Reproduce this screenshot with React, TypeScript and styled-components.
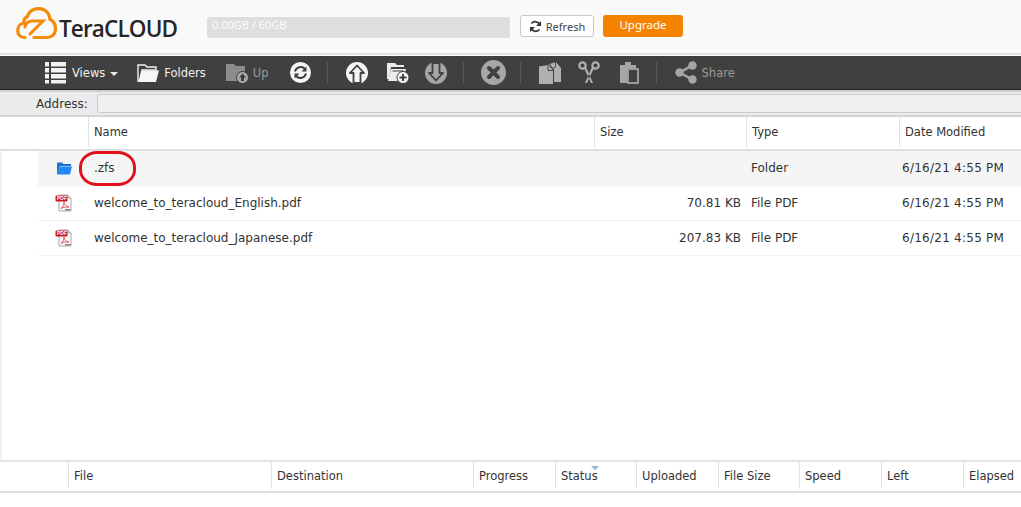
import React from 'react'
import styled, { createGlobalStyle } from 'styled-components'

const GlobalStyle = createGlobalStyle`
  html, body {
    margin: 0;
    padding: 0;
    background: #fff;
    overflow: hidden;
  }
  body {
    font-family: "DejaVu Sans", "Noto Sans", sans-serif;
    font-size: 12px;
    color: #333;
  }
`

const Page = styled.div`
  width: 1021px;
  height: 507px;
  display: flex;
  flex-direction: column;
  overflow: hidden;
`

const Header = styled.header`
  height: 53px;
  background: #fafafa;
  border-bottom: 2px solid #e4e4e4;
  display: flex;
  align-items: flex-start;
  flex-shrink: 0;
  padding-left: 16px;
`

const Logo = styled.div`
  display: flex;
  align-items: flex-start;
  width: 191px;
  height: 40px;
  margin-top: 7px;
  svg {
    flex-shrink: 0;
  }
`

const LogoText = styled.span`
  font-family: "Open Sans", sans-serif;
  font-size: 22.5px;
  font-weight: 600;
  letter-spacing: -0.85px;
  line-height: 30px;
  color: #262626;
  margin-left: 2px;
  margin-top: 7px;
`

const Quota = styled.div`
  width: 303px;
  height: 21px;
  margin-top: 17px;
  background: #dedede;
  border-radius: 2px;
  box-sizing: border-box;
  padding-left: 5px;
  color: #fcfcfc;
  font-family: "Noto Sans", sans-serif;
  font-size: 11px;
  line-height: 16px;
`

const RefreshButton = styled.div`
  width: 74px;
  height: 22px;
  margin: 15px 0 0 10px;
  box-sizing: border-box;
  background: #fff;
  border: 1px solid #c8c8c8;
  border-radius: 3px;
  display: flex;
  align-items: center;
  justify-content: center;
  gap: 4px;
  font-family: "Noto Sans", sans-serif;
  font-size: 11px;
  color: #444;
`

const UpgradeButton = styled.div`
  width: 80px;
  height: 22px;
  margin: 15px 0 0 9px;
  background: #f58300;
  border-radius: 3px;
  color: #fff;
  font-family: "Noto Sans", sans-serif;
  font-size: 11.5px;
  line-height: 20px;
  text-align: center;
`

const Toolbar = styled.nav`
  height: 33px;
  margin-top: 1px;
  background: #404040;
  border-bottom: 1px solid #222;
  display: flex;
  align-items: center;
  flex-shrink: 0;
  padding-left: 44px;
`

const ToolItem = styled.div<{ $after: number; $dim?: boolean }>`
  display: flex;
  align-items: center;
  gap: 5px;
  margin-right: ${(p) => p.$after}px;
  color: ${(p) => (p.$dim ? '#9a9a9a' : '#f0f0f0')};
  font-size: 11.5px;
  white-space: nowrap;
  svg {
    display: block;
    flex-shrink: 0;
  }
`

const Caret = styled.span`
  width: 0;
  height: 0;
  border-left: 4px solid transparent;
  border-right: 4px solid transparent;
  border-top: 4px solid #e8e8e8;
  margin-top: 2px;
`

const ToolSep = styled.span<{ $after: number }>`
  width: 1px;
  height: 21px;
  background: #585858;
  margin-right: ${(p) => p.$after}px;
`

const AddressBar = styled.div`
  height: 23px;
  background: #ebebeb;
  border-top: 2px solid #cfcfcf;
  border-bottom: 2px solid #d4d4d4;
  display: flex;
  align-items: center;
  flex-shrink: 0;
  padding-left: 36px;
  font-size: 12px;
  color: #333;
`

const AddressInput = styled.div`
  flex: 1;
  height: 17px;
  margin-left: 9px;
  background: #f0f0f0;
  border: 1px solid #ccc;
  border-right: none;
  border-radius: 3px 0 0 3px;
`

const HeaderRow = styled.div<{ $columns: string; $height: number }>`
  display: grid;
  grid-template-columns: ${(p) => p.$columns};
  height: ${(p) => p.$height}px;
  flex-shrink: 0;
  box-sizing: border-box;
  border-bottom: 2px solid #dcdfe6;
`

const HeaderCell = styled.div<{ $bare?: boolean }>`
  display: flex;
  align-items: center;
  padding-left: 5px;
  margin-bottom: 2px;
  position: relative;
  font-size: 11.5px;
  color: #333;
  border-left: ${(p) => (p.$bare ? 'none' : '1px solid #dde1e8')};
`

const FileList = styled.div`
  flex: 1;
  border-left: 2px solid #f2f2f2;
  padding-left: 36px;
`

const FileRow = styled.div<{ $selected?: boolean }>`
  display: grid;
  grid-template-columns: 51px 506px 152px 153px 1fr;
  height: 35px;
  box-sizing: border-box;
  align-items: center;
  background: ${(p) => (p.$selected ? '#f5f5f5' : '#fff')};
  border-bottom: 1px solid #f0f0f0;
  font-size: 12px;
  color: #333;
`

const IconCell = styled.div`
  display: flex;
  justify-content: center;
  svg {
    display: block;
  }
`

const NameCell = styled.div`
  position: relative;
  padding-left: 5px;
`

const SizeCell = styled.div`
  text-align: right;
  padding-right: 6px;
`

const TypeCell = styled.div`
  padding-left: 4px;
`

const DateCell = styled.div`
  padding-left: 2px;
  letter-spacing: 0.25px;
`

const RedMark = styled.span`
  position: absolute;
  left: -10px;
  top: 50%;
  width: 57px;
  height: 35px;
  margin-top: -17px;
  border: 3px solid #e1101d;
  border-radius: 18px / 16px;
  box-sizing: border-box;
`

const QueuePanel = styled.section`
  height: 45px;
  flex-shrink: 0;
  border-top: 2px solid #e2e4ea;
`

const SortMark = styled.span`
  position: absolute;
  left: 35px;
  top: 4px;
  width: 0;
  height: 0;
  border-left: 4px solid transparent;
  border-right: 4px solid transparent;
  border-top: 4px solid #8fb8d6;
`

const PdfLabel = styled.text`
  font-family: "Liberation Sans", sans-serif;
  font-size: 5px;
  font-weight: 700;
  fill: #fff;
`

const Icon: React.FC<{ w?: number; h?: number; children: React.ReactNode }> = ({ w = 24, h = 24, children }) => (
  <svg width={w} height={h} viewBox={`0 0 ${w} ${h}`}>
    {children}
  </svg>
)

const columns = ['Name', 'Size', 'Type', 'Date Modified']

const queueColumns = ['File', 'Destination', 'Progress', 'Status', 'Uploaded', 'File Size', 'Speed', 'Left', 'Elapsed']

const files = [
  { name: 'welcome_to_teracloud_English.pdf', size: '70.81 KB' },
  { name: 'welcome_to_teracloud_Japanese.pdf', size: '207.83 KB' },
]

const PdfIcon = () => (
  <Icon w={18} h={18}>
    <path d="M4 1h9l3 3v13H4z" fill="#fbfbfb" stroke="#a8a8a8" strokeWidth="1" />
    <path d="M13 1v3h3" fill="#ddd" stroke="#a8a8a8" strokeWidth="0.8" />
    <rect x="0.5" y="1.500" width="12" height="6" rx="1" fill="#c8161d" />
    <PdfLabel x="2" y="6.300">PDF</PdfLabel>
    <path d="M6 14.500c2-1.500 3-4 3-6.500 0 2.500 2 4.500 5 5-3-.2-6 .2-8 1.500z" fill="none" stroke="#d8494e" strokeWidth="0.9" />
    <rect x="10" y="15" width="5.500" height="1.500" fill="#808080" />
  </Icon>
)

const App: React.FC = () => (
  <Page>
    <GlobalStyle />
    <Header>
      <Logo>
        <svg width="41" height="33" viewBox="0 0 41 33">
          <path
            d="M9 30.500H8C4 30.500 1.700 27 1.700 23.500 1.700 19.500 4.500 16.500 8 16 7.500 13 8.500 11 11 10 13 4 18 1.700 23 1.700 29 1.700 33.500 6 34 12.500 37.500 14 39.500 18 39.500 22 39.500 27 36 30.500 31 30.500H18"
            fill="none"
            stroke="#f58a0b"
            strokeWidth="3.200"
            strokeLinecap="round"
          />
          <path
            d="M9 20C10 16 12 14 16 14H27L14 27"
            fill="none"
            stroke="#f58a0b"
            strokeWidth="3"
            strokeLinejoin="miter"
            strokeLinecap="round"
          />
        </svg>
        <LogoText>TeraCLOUD</LogoText>
      </Logo>
      <Quota>0.00GB / 60GB</Quota>
      <RefreshButton>
        <Icon w={13} h={13}>
          <path d="M11 5A5 5 0 0 0 2.500 3.500M2 8a5 5 0 0 0 8.500 1.500" fill="none" stroke="#333" strokeWidth="1.800" />
          <path d="M12 1v5H7zM1 12V7h5z" fill="#333" />
        </Icon>
        Refresh
      </RefreshButton>
      <UpgradeButton>Upgrade</UpgradeButton>
    </Header>
    <Toolbar>
      <ToolItem $after={19}>
        <Icon w={23} h={23}>
          <path d="M1 1h4v4.500H1zM7 1h15v4.500H7zM1 7h4v4.500H1zM7 7h15v4.500H7zM1 13h4v4.500H1zM7 13h15v4.500H7zM1 19h4v3.500H1zM7 19h15v3.500H7z" fill="#f2f2f2" />
        </Icon>
        Views
        <Caret />
      </ToolItem>
      <ToolItem $after={20}>
        <Icon w={22} h={20}>
          <path d="M1 18V2h7l2 2h9v3H5L2.500 18z" fill="none" stroke="#f2f2f2" strokeWidth="1.400" />
          <path d="M5 7.500h17l-3 11.500H1.500z" fill="#f6f6f6" />
        </Icon>
        Folders
      </ToolItem>
      <ToolItem $after={21} $dim>
        <Icon w={22} h={23}>
          <path d="M0 3h8l2 2h9v6a7 7 0 0 0-8 9H0z" fill="#8c8c8c" />
          <circle cx="16.500" cy="16.500" r="6" fill="#a8a8a8" stroke="#404040" />
          <path d="M16.500 12.500l3.500 4H18v3.500h-3v-3.500h-2z" fill="#404040" />
        </Icon>
        Up
      </ToolItem>
      <ToolItem $after={16}>
        <Icon w={21} h={21}>
          <circle cx="10.500" cy="10.500" r="10.500" fill="#f5f5f5" />
          <path d="M5 9.500a5.800 5.800 0 0 1 10-2.500M16 11.500a5.800 5.800 0 0 1-10 2.500" fill="none" stroke="#404040" strokeWidth="2" />
          <path d="M16.500 4.500v5h-5zM4.500 16.500v-5h5z" fill="#404040" />
        </Icon>
      </ToolItem>
      <ToolSep $after={18} />
      <ToolItem $after={18}>
        <Icon w={22} h={22}>
          <circle cx="11" cy="11" r="11" fill="#f5f5f5" />
          <path d="M11 3.500L18 11H14.500V21H7.500V11H4z" fill="#f5f5f5" stroke="#404040" strokeWidth="1.800" strokeLinejoin="round" />
        </Icon>
      </ToolItem>
      <ToolItem $after={16}>
        <Icon w={23} h={23}>
          <path d="M1 2h8l2 2h7v2H5L3 18H1z" fill="#ececec" />
          <path d="M5 8h15l-3 12H2z" fill="#ececec" />
          <path d="M6.500 10h11" stroke="#404040" strokeWidth="1" />
          <circle cx="17" cy="16.500" r="6" fill="#f5f5f5" stroke="#404040" />
          <path d="M13.500 15.500h2.500v-2.500h2v2.500h2.500v2H18v2.500h-2v-2.500h-2.500z" fill="#404040" />
        </Icon>
      </ToolItem>
      <ToolItem $after={16}>
        <Icon w={22} h={22}>
          <circle cx="11" cy="11" r="11" fill="#a6a6a6" />
          <path d="M11 18.500L4 11H7.500V1H14.500V11H18z" fill="#a6a6a6" stroke="#404040" strokeWidth="1.800" strokeLinejoin="round" />
        </Icon>
      </ToolItem>
      <ToolSep $after={17} />
      <ToolItem $after={14}>
        <Icon w={25} h={25}>
          <circle cx="12.500" cy="12.500" r="12.500" fill="#a6a6a6" />
          <path d="M8 8l9 9M17 8l-9 9" stroke="#404040" strokeWidth="4" strokeLinecap="round" />
        </Icon>
      </ToolItem>
      <ToolSep $after={18} />
      <ToolItem $after={16}>
        <Icon w={23} h={23}>
          <path d="M0 5.500L9 4l5 5v14H0z" fill="#b0b0b0" />
          <path d="M9 3.500L17 1l5 6v14h-7V8z" fill="#b0b0b0" />
          <path d="M9 4v5.500h5M10.500 3l3 4.500 3-1.500M16.500 1v5" fill="none" stroke="#404040" strokeWidth="0.900" />
        </Icon>
      </ToolItem>
      <ToolItem $after={20}>
        <Icon w={22} h={23}>
          <circle cx="4.500" cy="4.500" r="3.200" fill="none" stroke="#b0b0b0" strokeWidth="2.200" />
          <circle cx="17.500" cy="4.500" r="3.200" fill="none" stroke="#b0b0b0" strokeWidth="2.200" />
          <path d="M6 7l7 15h2L8.500 7M16 7L9 22H7l6.500-15z" fill="#b0b0b0" />
        </Icon>
      </ToolItem>
      <ToolItem $after={17}>
        <Icon w={19} h={23}>
          <path d="M0 4h5V1h6v3h5v3H7v15H0z" fill="#a6a6a6" />
          <rect x="8" y="8" width="10" height="14" fill="none" stroke="#a6a6a6" strokeWidth="1.800" />
        </Icon>
      </ToolItem>
      <ToolSep $after={18} />
      <ToolItem $after={0} $dim>
        <Icon w={22} h={23}>
          <path d="M17 4.500L5 11.500l12 7" fill="none" stroke="#a6a6a6" strokeWidth="2.600" />
          <circle cx="17.500" cy="4.500" r="4.200" fill="#a6a6a6" />
          <circle cx="4.500" cy="11.500" r="4.200" fill="#a6a6a6" />
          <circle cx="17.500" cy="18.500" r="4.200" fill="#a6a6a6" />
        </Icon>
        Share
      </ToolItem>
    </Toolbar>
    <AddressBar>
      Address:
      <AddressInput />
    </AddressBar>
    <HeaderRow $height={34} $columns="88px 506px 152px 153px 1fr">
      <HeaderCell $bare />
      {columns.map((c) => (
        <HeaderCell key={c}>{c}</HeaderCell>
      ))}
    </HeaderRow>
    <FileList>
      <FileRow $selected>
        <IconCell>
          <Icon w={16} h={14}>
            <path d="M1 13V1.500h5l1.500 1.500H15v2H4L1.500 13z" fill="#1a74d8" />
            <path d="M4 5.500h12L14 13.500H1z" fill="#2288f2" />
          </Icon>
        </IconCell>
        <NameCell>
          .zfs
          <RedMark />
        </NameCell>
        <SizeCell />
        <TypeCell>Folder</TypeCell>
        <DateCell>6/16/21 4:55 PM</DateCell>
      </FileRow>
      {files.map((f) => (
        <FileRow key={f.name}>
          <IconCell>
            <PdfIcon />
          </IconCell>
          <NameCell>{f.name}</NameCell>
          <SizeCell>{f.size}</SizeCell>
          <TypeCell>File PDF</TypeCell>
          <DateCell>6/16/21 4:55 PM</DateCell>
        </FileRow>
      ))}
    </FileList>
    <QueuePanel>
      <HeaderRow $height={31} $columns="68px 203px 202px 82px 81px 82px 81px 82px 82px 1fr">
        <HeaderCell $bare />
        {queueColumns.map((c) => (
          <HeaderCell key={c}>
            {c}
            {c === 'Status' && <SortMark />}
          </HeaderCell>
        ))}
      </HeaderRow>
    </QueuePanel>
  </Page>
)

export default App
